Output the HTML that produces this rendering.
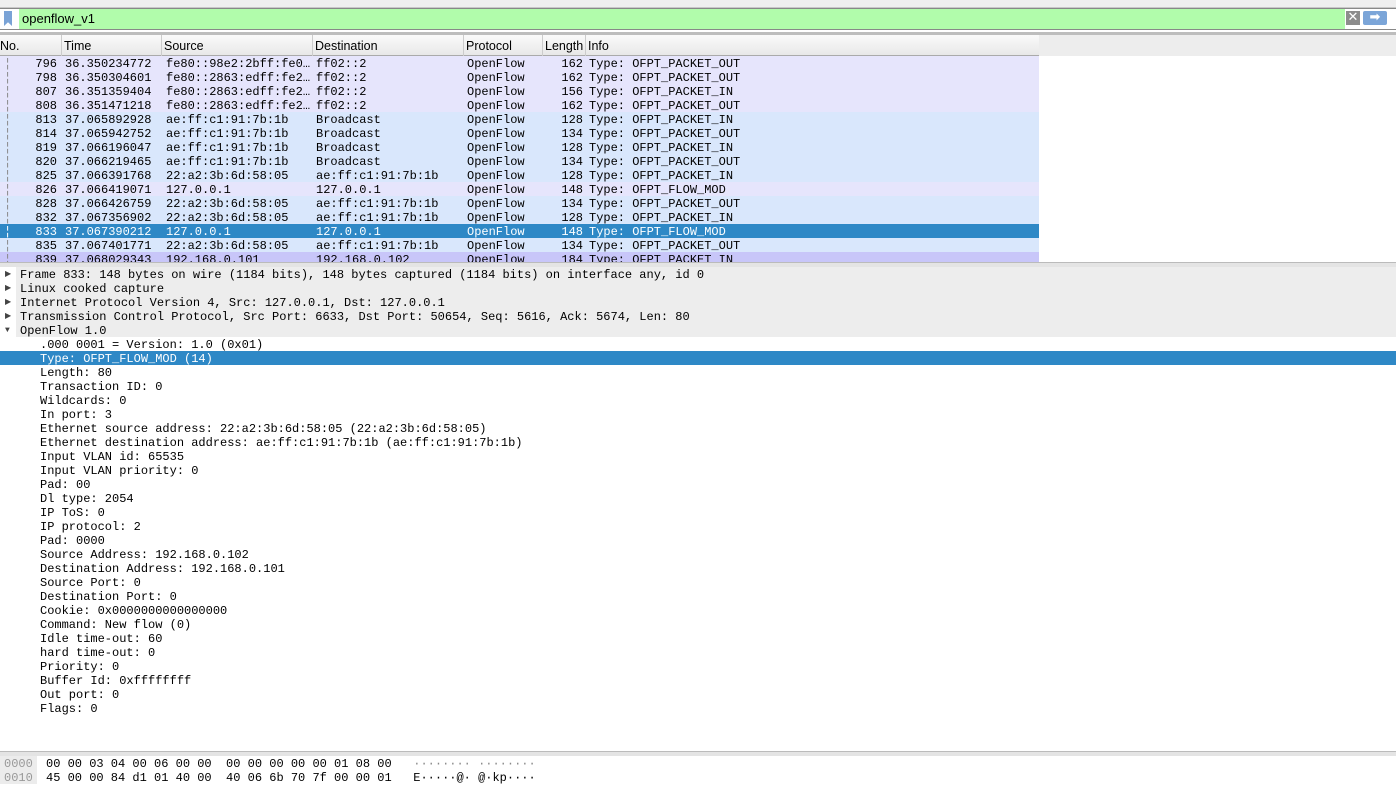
<!DOCTYPE html>
<html><head><meta charset="utf-8"><style>
body{margin:0;width:1396px;height:778px;overflow:hidden;background:#fff;font-family:"Liberation Mono",monospace;font-size:12px;position:relative}
.a{position:absolute}
.sans{font-family:"Liberation Sans","DejaVu Sans",sans-serif}
.row{position:absolute;left:0;width:1039px;height:14px;line-height:16px;white-space:pre}
.row span{position:absolute;top:0}
.d{position:absolute;left:0;width:1396px;height:14px;line-height:16px;white-space:pre}
.hx{position:absolute;height:14px;line-height:16px;white-space:pre}
</style></head><body>
<div class="a" style="left:0;top:0;width:1396px;height:7px;background:#efefef;border-bottom:1px solid #c8c8c8"></div>
<div class="a" style="left:0;top:8px;width:1396px;height:22px;background:#fff;border-top:1px solid #888;border-bottom:1px solid #888;box-sizing:border-box"></div>
<div class="a" style="left:19px;top:9px;width:1326px;height:20px;background:#b1fcab"></div>
<div class="a" style="left:4px;top:11px;width:8px;height:15px;background:#7aa3d6;clip-path:polygon(0 0,100% 0,100% 100%,50% 75%,0 100%)"></div>
<div class="a sans" style="left:22px;top:11px;font-size:13px;line-height:16px">openflow_v1</div>
<div class="a" style="left:1346px;top:11px;width:14px;height:14px;background:#8c8c8c;color:#fff;font:13px/14px 'DejaVu Sans';text-align:center">✕</div>
<div class="a" style="left:1363px;top:11px;width:24px;height:14px;background:#7ba5d8;border-radius:2px;color:#fff;font:bold 13px/14px 'DejaVu Sans';text-align:center">➡</div>
<div class="a" style="left:0;top:32px;width:1396px;height:3px;background:#bdbdbd"></div>
<div class="a sans" style="left:0;top:35px;width:1396px;height:21px;background:#ededed;font-size:12.5px;line-height:23px">
<div class="a" style="left:0;width:1039px;height:21px;background:linear-gradient(#fafafa,#e8e8e8);border-bottom:1px solid #aaa;box-sizing:border-box"></div>
<span class="a" style="left:0">No.</span>
<span class="a" style="left:61px;border-left:1px solid #ccc;padding-left:2px;height:21px">Time</span>
<span class="a" style="left:161px;border-left:1px solid #ccc;padding-left:2px;height:21px">Source</span>
<span class="a" style="left:312px;border-left:1px solid #ccc;padding-left:2px;height:21px">Destination</span>
<span class="a" style="left:463px;border-left:1px solid #ccc;padding-left:2px;height:21px">Protocol</span>
<span class="a" style="left:542px;border-left:1px solid #ccc;padding-left:2px;height:21px">Length</span>
<span class="a" style="left:585px;border-left:1px solid #ccc;padding-left:2px;height:21px">Info</span>
</div>
<div id="pl"></div>
<div class="a" style="left:0;top:262px;width:1396px;height:5px;background:#e4e4e4;border-top:1px solid #bbb;box-sizing:border-box"></div>
<div id="dt"></div>
<div class="a" style="left:0;top:751px;width:1396px;height:5px;background:#e4e4e4;border-top:1px solid #bbb;box-sizing:border-box"></div>
<div class="a" style="left:0;top:756px;width:37px;height:28px;background:#ececec"></div>
<div class="hx" style="left:4px;top:756px;color:#999">0000</div>
<div class="hx" style="left:46px;top:756px">00 00 03 04 00 06 00 00  00 00 00 00 00 01 08 00   <span style="color:#888">········ ········</span></div>
<div class="hx" style="left:4px;top:770px;color:#999">0010</div>
<div class="hx" style="left:46px;top:770px">45 00 00 84 d1 01 40 00  40 06 6b 70 7f 00 00 01   E·····@· @·kp····</div>
<script>
var rows=[
["796","36.350234772","fe80::98e2:2bff:fe0…","ff02::2","162","OFPT_PACKET_OUT","#e6e5fc"],
["798","36.350304601","fe80::2863:edff:fe2…","ff02::2","162","OFPT_PACKET_OUT","#e6e5fc"],
["807","36.351359404","fe80::2863:edff:fe2…","ff02::2","156","OFPT_PACKET_IN","#e6e5fc"],
["808","36.351471218","fe80::2863:edff:fe2…","ff02::2","162","OFPT_PACKET_OUT","#e6e5fc"],
["813","37.065892928","ae:ff:c1:91:7b:1b","Broadcast","128","OFPT_PACKET_IN","#d9e7fc"],
["814","37.065942752","ae:ff:c1:91:7b:1b","Broadcast","134","OFPT_PACKET_OUT","#d9e7fc"],
["819","37.066196047","ae:ff:c1:91:7b:1b","Broadcast","128","OFPT_PACKET_IN","#d9e7fc"],
["820","37.066219465","ae:ff:c1:91:7b:1b","Broadcast","134","OFPT_PACKET_OUT","#d9e7fc"],
["825","37.066391768","22:a2:3b:6d:58:05","ae:ff:c1:91:7b:1b","128","OFPT_PACKET_IN","#d9e7fc"],
["826","37.066419071","127.0.0.1","127.0.0.1","148","OFPT_FLOW_MOD","#e6e5fc"],
["828","37.066426759","22:a2:3b:6d:58:05","ae:ff:c1:91:7b:1b","134","OFPT_PACKET_OUT","#d9e7fc"],
["832","37.067356902","22:a2:3b:6d:58:05","ae:ff:c1:91:7b:1b","128","OFPT_PACKET_IN","#d9e7fc"],
["833","37.067390212","127.0.0.1","127.0.0.1","148","OFPT_FLOW_MOD","#2e88c6"],
["835","37.067401771","22:a2:3b:6d:58:05","ae:ff:c1:91:7b:1b","134","OFPT_PACKET_OUT","#d9e7fc"],
["839","37.068029343","192.168.0.101","192.168.0.102","184","OFPT_PACKET_IN","#c8c6f9"]];
var h="";rows.forEach(function(r,i){var sel=r[6]=="#2e88c6";var t=56+i*14;var hh=t+14>262?262-t:14;
h+='<div class="row" style="top:'+t+'px;height:'+hh+'px;overflow:hidden;background:'+r[6]+';color:'+(sel?'#fff':'#000')+'">'+
'<span style="left:4px;color:'+(sel?'#fff':'#888')+'">¦</span><span style="right:982px">'+r[0]+'</span><span style="left:65px">'+r[1]+'</span><span style="left:166px">'+r[2]+'</span><span style="left:316px">'+r[3]+'</span><span style="left:467px">OpenFlow</span><span style="right:456px">'+r[4]+'</span><span style="left:589px">Type: '+r[5]+'</span></div>';});
document.getElementById("pl").innerHTML=h;
var d=[["Frame 833: 148 bytes on wire (1184 bits), 148 bytes captured (1184 bits) on interface any, id 0",0],
["Linux cooked capture",0],["Internet Protocol Version 4, Src: 127.0.0.1, Dst: 127.0.0.1",0],
["Transmission Control Protocol, Src Port: 6633, Dst Port: 50654, Seq: 5616, Ack: 5674, Len: 80",0],
["OpenFlow 1.0",1],[".000 0001 = Version: 1.0 (0x01)",2],["Type: OFPT_FLOW_MOD (14)",3],
"Length: 80|Transaction ID: 0|Wildcards: 0|In port: 3|Ethernet source address: 22:a2:3b:6d:58:05 (22:a2:3b:6d:58:05)|Ethernet destination address: ae:ff:c1:91:7b:1b (ae:ff:c1:91:7b:1b)|Input VLAN id: 65535|Input VLAN priority: 0|Pad: 00|Dl type: 2054|IP ToS: 0|IP protocol: 2|Pad: 0000|Source Address: 192.168.0.102|Destination Address: 192.168.0.101|Source Port: 0|Destination Port: 0|Cookie: 0x0000000000000000|Command: New flow (0)|Idle time-out: 60|hard time-out: 0|Priority: 0|Buffer Id: 0xffffffff|Out port: 0|Flags: 0"];
var items=d.slice(0,7);d[7].split("|").forEach(function(s){items.push([s,2])});
h="";items.forEach(function(it,i){var t=267+i*14;var k=it[1];
if(k<2){h+='<div class="d" style="top:'+t+'px"><div class="a" style="left:16px;top:0;width:1380px;height:14px;background:#ededed"></div><span class="a" style="left:5px;top:0;font-size:8px;color:#444">'+(k==1?'▼':'▶')+'</span><span class="a" style="left:20px;top:0">'+it[0]+'</span></div>';}
else{var sel=k==3;h+='<div class="d" style="top:'+t+'px;'+(sel?'background:#2e88c6;color:#fff':'')+'"><span class="a" style="left:40px;top:0">'+it[0]+'</span></div>';}});
document.getElementById("dt").innerHTML=h;
</script>
</body></html>
